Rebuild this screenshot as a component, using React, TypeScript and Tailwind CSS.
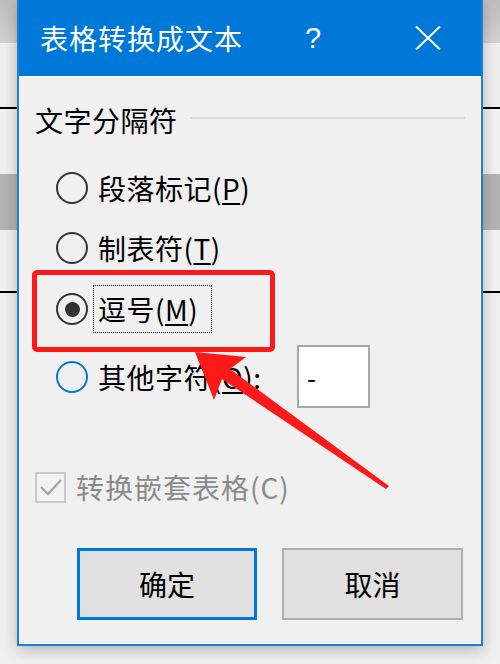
import React from "react"

const font = "font-['Microsoft_YaHei','Noto_Sans_CJK_SC',sans-serif]"

function Radio({ checked, hover }: { checked?: boolean; hover?: boolean }) {
  return (
    <span
      className={`w-[32px] h-[32px] rounded-full border-2 flex items-center justify-center shrink-0 bg-[#f0f0f0] ${
        hover ? "border-[#0078d7]" : "border-[#333333]"
      }`}
    >
      {checked && <span className="w-[15px] h-[15px] rounded-full bg-[#333333]" />}
    </span>
  )
}

export default function App() {
  return (
    <div className={`relative w-[500px] h-[664px] overflow-hidden bg-[#f0f0f0] ${font}`}>
      {/* document behind the dialog */}
      <div className="flex flex-col">
        <div className="h-[43px] bg-gradient-to-b from-[#bdbdbd] to-[#d3d3d3]" />
        <div className="h-[64px] bg-[#efefef]" />
        <div className="h-[2px] bg-black" />
        <div className="h-[65px] bg-[#f1f1f1]" />
        <div className="h-[56px] bg-[#b3b3b3]" />
        <div className="h-[61px] bg-[#f1f1f1]" />
        <div className="h-[2px] bg-black" />
        <div className="h-[371px] bg-[#f0f0f0]" />
      </div>

      {/* dialog */}
      <div className="absolute left-[17px] top-0 w-[466px] h-[646px] bg-[#1a7fd6] px-[2px] pb-[2px] flex flex-col shadow-[0_4px_14px_rgba(0,0,0,0.25)]">
        <div className="h-[76px] shrink-0 bg-[#0078d7] flex items-center text-white">
          <span className="pl-[21px] text-[28px] leading-none tracking-[1px]">表格转换成文本</span>
          <span className="ml-[62px] text-[29px] leading-none font-['Liberation_Sans',sans-serif]">?</span>
          <svg className="ml-[94px]" width="26" height="24" viewBox="0 0 26 24">
            <path d="M1 0.5 L25 23.5 M25 0.5 L1 23.5" stroke="white" strokeWidth="2" fill="none" />
          </svg>
        </div>

        <div className="flex-1 bg-[#f0f0f0] border border-[#fbfbfb] pl-[15px] pr-[15px] flex flex-col text-black">
          <div className="mt-[25px] h-[36px] flex items-center">
            <span className="text-[28px] leading-none tracking-[0.5px]">文字分隔符</span>
            <span className="flex-1 h-[2px] bg-[#dcdcdc] ml-[12px] -mt-[4px]" />
          </div>

          <div className="mt-[30px] h-[40px] flex items-center pl-[21px] gap-[10px]">
            <Radio />
            <span className="text-[28px] leading-none tracking-[0.5px]">
              段落标记(<span className="underline underline-offset-[3px]">P</span>)
            </span>
          </div>

          <div className="mt-[20px] h-[40px] flex items-center pl-[21px] gap-[10px]">
            <Radio />
            <span className="text-[28px] leading-none tracking-[0.5px]">
              制表符(<span className="underline underline-offset-[3px]">T</span>)
            </span>
          </div>

          <div className="mt-[21px] h-[40px] flex items-center pl-[21px] gap-[5px]">
            <Radio checked />
            <span className="h-[48px] w-[119px] border border-dotted border-black flex items-center pl-[4px] text-[28px] leading-none tracking-[0.5px]">
              逗号(<span className="underline underline-offset-[3px]">M</span>)
            </span>
          </div>

          <div className="mt-[16px] h-[63px] flex items-center pl-[21px] gap-[10px]">
            <Radio hover />
            <span className="w-[199px] text-[28px] leading-none tracking-[0.5px]">
              其他字符(<span className="underline underline-offset-[3px]">O</span>):
            </span>
            <span className="w-[73px] h-[63px] bg-white border-2 border-[#a8a8a8] flex items-center pl-[8px] text-[26px] leading-none -ml-[10px]">
              -
            </span>
          </div>

          <div className="mt-[59px] h-[40px] flex items-center gap-[10px]">
            <span className="w-[31px] h-[31px] border-2 border-[#cacaca] bg-[#f2f2f2] flex items-center justify-center">
              <svg width="24" height="20" viewBox="0 0 24 20">
                <path d="M2 10 L9 17 L22 3" stroke="#a6a6a6" strokeWidth="2.4" fill="none" />
              </svg>
            </span>
            <span className="text-[28px] leading-none tracking-[1px] text-[#8a8a8a]">转换嵌套表格(C)</span>
          </div>

          <div className="mt-[41px] flex justify-end gap-[25px] mr-[2px]">
            <span className="w-[180px] h-[72px] bg-[#e1e1e1] border-[3px] border-[#0078d7] flex items-center justify-center text-[28px] leading-none">
              确定
            </span>
            <span className="w-[181px] h-[72px] bg-[#e1e1e1] border-2 border-[#adadad] flex items-center justify-center text-[28px] leading-none">
              取消
            </span>
          </div>
        </div>
      </div>

      {/* annotation: red highlight box */}
      <div className="absolute left-[32px] top-[270px] w-[243px] h-[82px] border-[5px] border-[#fa1a1a] rounded-[5px]" />

      {/* annotation: red arrow */}
      <svg className="absolute left-0 top-0 pointer-events-none" width="500" height="664" viewBox="0 0 500 664">
        <polygon
          points="195,352 246,357 230,369 389,486 386,489 222,379 214,400"
          fill="#fa1a1a"
        />
      </svg>
    </div>
  )
}
